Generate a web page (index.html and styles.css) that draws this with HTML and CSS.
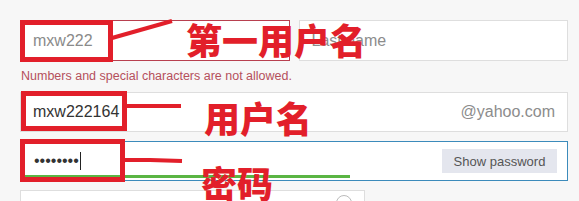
FILE: index.html
```html
<!DOCTYPE html>
<html lang="en">
<head>
    <meta charset="UTF-8">
    <title>Sign up</title>
    <link rel="stylesheet" href="styles.css">
</head>
<body>
    <div class="form">
        <div class="name-row">
            <div class="field error"><span class="value light">mxw222</span></div>
            <div class="field"><span class="placeholder">Last name</span></div>
        </div>
        <div class="error-msg">Numbers and special characters are not allowed.</div>
        <div class="field email">
            <span class="value">mxw222164</span>
            <span class="suffix">@yahoo.com</span>
        </div>
        <div class="field password">
            <span class="value dots">&bull;&bull;&bull;&bull;&bull;&bull;&bull;&bull;</span><span class="caret"></span>
            <button class="show-btn">Show password</button>
            <div class="strength"></div>
        </div>
        <div class="birth-row">
            <div class="field select"><span class="knob"></span></div>
        </div>

        <!-- 标注 -->
        <div class="mark box1"></div>
        <div class="mark box2"></div>
        <div class="mark box3"></div>
        <svg class="lines" width="579" height="201">
            <line x1="112" y1="38" x2="172" y2="21" />
            <line x1="127" y1="106" x2="181" y2="106" />
            <polyline points="125,160 150,160 182,161" />
        </svg>
        <div class="label label1">第一用户名</div>
        <div class="label label2">用户名</div>
        <div class="label label3">密码</div>
    </div>
</body>
</html>
```

FILE: styles.css
```css
body {
    margin: 0;
    background-color: #f7f7f7;
    font-family: "Liberation Sans", Arial, sans-serif;
    overflow: hidden;
    height: 201px;
}

.form {
    position: relative;
    width: 548px;
    height: 181px;
    padding: 20px 0 0 20px;
}

.name-row {
    display: flex;
    gap: 9px;
}

.name-row .field {
    flex: 1;
}

.field {
    position: relative;
    height: 41px;
    box-sizing: border-box;
    background-color: #fff;
    border: 1px solid #dedede;
    display: flex;
    align-items: center;
    padding: 0 12px;
    font-size: 16px;
}

.field.error {
    border-color: #b8404f;
}

.value {
    color: #333;
}

.value.light {
    color: #8a8a8a;
}

.placeholder {
    color: #8c8c8c;
}

.error-msg {
    color: #b5505c;
    font-size: 12.5px;
    height: 31px;
    line-height: 30px;
    padding-left: 1px;
}

.email {
    justify-content: space-between;
    height: 40px;
    padding-right: 12px;
}

.suffix {
    color: #8c8c8c;
    font-size: 16px;
}

.password {
    margin-top: 9px;
    height: 40px;
    border-color: #3c8bbb;
    padding-right: 10px;
}

.dots {
    font-size: 16px;
    margin-left: 1px;
}

.caret {
    display: inline-block;
    width: 1px;
    height: 18px;
    background-color: #222;
    margin-left: 1px;
}

.show-btn {
    margin-left: auto;
    height: 24px;
    width: 115px;
    border: none;
    background-color: #e4e6ee;
    color: #555;
    font-family: "Liberation Sans", Arial, sans-serif;
    font-size: 13px;
    padding: 0;
}

.strength {
    position: absolute;
    left: 1px;
    bottom: 2px;
    width: 328px;
    height: 3px;
    background-color: #5ab543;
}

.birth-row {
    margin-top: 9px;
}

.select {
    width: 345px;
    height: 30px;
}

.knob {
    position: absolute;
    right: 12px;
    top: 4px;
    width: 14px;
    height: 14px;
    border: 1px solid #bbb;
    border-radius: 50%;
}

/* annotations */
.mark {
    position: absolute;
    border: 5px solid #e21f2a;
    box-sizing: border-box;
}

.box1 {
    left: 20px;
    top: 20px;
    width: 93px;
    height: 42px;
}

.box2 {
    left: 21px;
    top: 91px;
    width: 106px;
    height: 40px;
}

.box3 {
    left: 20px;
    top: 139px;
    width: 105px;
    height: 43px;
}

.lines {
    position: absolute;
    left: 0;
    top: 0;
    pointer-events: none;
}

.lines line,
.lines polyline {
    stroke: #e21f2a;
    stroke-width: 4;
    fill: none;
}

.label {
    position: absolute;
    color: #e21f2a;
    font-family: "Noto Sans CJK SC", sans-serif;
    font-weight: 900;
    font-size: 36px;
    line-height: 1;
    white-space: nowrap;
}

.label1 {
    left: 186px;
    top: 21px;
}

.label2 {
    left: 204px;
    top: 99px;
}

.label3 {
    left: 201px;
    top: 164px;
}
```
